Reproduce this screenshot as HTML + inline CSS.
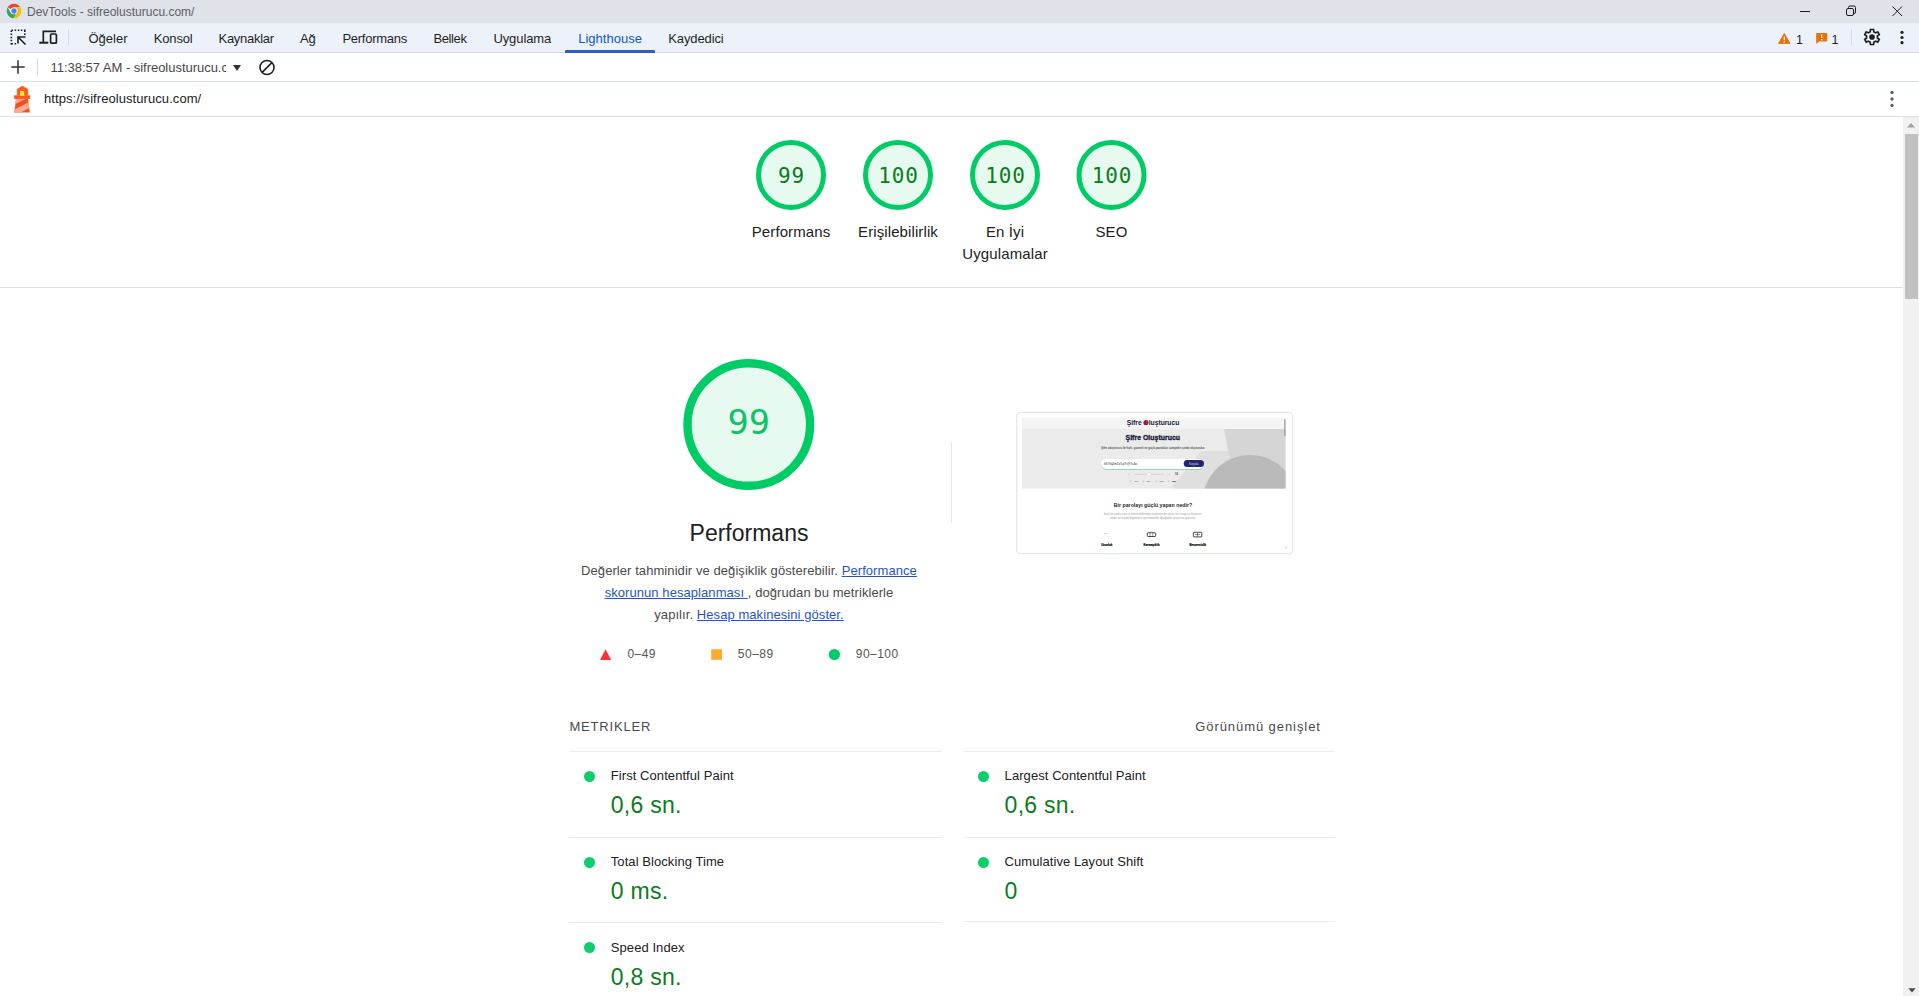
<!DOCTYPE html>
<html lang="tr">
<head>
<meta charset="utf-8">
<title>DevTools - sifreolusturucu.com/</title>
<style>
*{box-sizing:border-box;margin:0;padding:0}
html,body{width:1919px;height:996px;overflow:hidden;background:#fff}
body{position:relative;font-family:"Liberation Sans",sans-serif;color:#202124}
.abs{position:absolute;white-space:nowrap}
#titlebar{position:absolute;left:0;top:0;width:1919px;height:23px;background:#dfe2e9}
#tabbar{position:absolute;left:0;top:23px;width:1919px;height:30px;background:#edf2fa;border-bottom:1px solid #d3dcea}
#toolbar{position:absolute;left:0;top:53px;width:1919px;height:29px;background:#fff;border-bottom:1px solid #d6dfec}
#urlbar{position:absolute;left:0;top:82px;width:1919px;height:35px;background:#fff;border-bottom:1px solid #e0e0e0}
.tab{position:absolute;top:31px;font-size:13px;line-height:15px;color:#1f1f1f;white-space:nowrap;letter-spacing:-0.2px}
.tab.sel{color:#0b57d0}
#scroll{position:absolute;left:1903px;top:117px;width:16px;height:879px;background:#f1f1f1}
#thumb{position:absolute;left:1905px;top:134px;width:13px;height:165px;background:#c1c1c1}
.gl{position:absolute;text-align:center;font-size:15px;line-height:22px;color:#212121}
.gnum{font-family:"Liberation Mono",monospace;}
.mlabel{position:absolute;font-size:13px;line-height:16px;color:#212121;white-space:nowrap;letter-spacing:0.07px}
.mval{position:absolute;font-size:23px;line-height:28px;color:#0a7d1c;white-space:nowrap;letter-spacing:0.25px}
.dot{position:absolute;width:11.300px;height:11.300px;border-radius:50%;background:#0cce6b}
.hr{position:absolute;height:1px;background:#ebebeb}
a{color:#1f55cc;text-decoration:underline}
</style>
</head>
<body>
<div id="titlebar"></div>
<div id="tabbar"></div>
<div id="toolbar"></div>
<div id="urlbar"></div>

<!-- title bar -->
<svg class="abs" style="left:5.800px;top:2.900px" width="16" height="16" viewBox="0 0 48 48">
  <circle cx="24" cy="24" r="22" fill="#fff"/>
  <path d="M24 2A22 22 0 0 1 43.05 13H24a11 11 0 0 0-9.53 5.5L5 13.1A22 22 0 0 1 24 2z" fill="#ea4335"/>
  <path d="M43.05 13A22 22 0 0 1 22.5 45.95L32 29.5A11 11 0 0 0 33.5 18.5 11 11 0 0 0 24 13z" fill="#fbbc04"/>
  <path d="M22.5 45.95A22 22 0 0 1 4.95 13.1L14.47 29.5A11 11 0 0 0 32 29.5z" fill="#34a853"/>
  <circle cx="24" cy="24" r="10" fill="#fff"/>
  <circle cx="24" cy="24" r="8" fill="#4285f4"/>
</svg>
<div class="abs" style="left:27px;top:4.700px;font-size:12px;line-height:14px;color:#5c5f66">DevTools - sifreolusturucu.com/</div>
<svg class="abs" style="left:1780px;top:0" width="139" height="23" viewBox="0 0 139 23" fill="none" stroke="#1b1b1b" stroke-width="1">
  <path d="M20 11.5h10"/>
  <rect x="66.5" y="8.500" width="7" height="7" rx="1.5"/>
  <path d="M68.500 8.500v-1a1.500 1.500 0 0 1 1.500-1.500h4a1.500 1.500 0 0 1 1.500 1.500v4.500a1.500 1.500 0 0 1-1.500 1.500h-0.500"/>
  <path d="M112.500 6.500l9.500 9.500M122 6.500l-9.500 9.500"/>
</svg>

<!-- tab bar -->
<svg class="abs" style="left:9px;top:28px" width="50" height="18" viewBox="0 0 50 18" fill="none" stroke="#1f1f1f">
  <path d="M2.500 2.300h14" stroke-width="1.600" stroke-dasharray="1.500 1.620"/>
  <path d="M2.300 2.500v14" stroke-width="1.600" stroke-dasharray="1.500 1.620"/>
  <path d="M2.500 15.800h5.500" stroke-width="1.600" stroke-dasharray="1.500 1.620"/>
  <path d="M15.800 2.500v5" stroke-width="1.600" stroke-dasharray="1.500 1.620"/>
  <path d="M9 15.500v-6.500h7.500M9.500 9.500l7 7" stroke-width="1.600"/>
  <path d="M34.300 14v-10.600h12.700" stroke-width="1.700"/>
  <path d="M30.300 14.700h9" stroke-width="2"/>
  <rect x="41.600" y="6" width="5.800" height="9.200" rx="1" stroke-width="1.700"/>
</svg>
<div class="abs" style="left:68px;top:29px;width:1px;height:16px;background:#d3dbe8"></div>
<div class="tab" style="left:88.500px;letter-spacing:0">Öğeler</div>
<div class="tab" style="left:153.800px;letter-spacing:-0.170px">Konsol</div>
<div class="tab" style="left:218.500px;letter-spacing:-0.270px">Kaynaklar</div>
<div class="tab" style="left:300px;letter-spacing:-0.200px">Ağ</div>
<div class="tab" style="left:342.400px;letter-spacing:-0.260px">Performans</div>
<div class="tab" style="left:433.400px;letter-spacing:-0.370px">Bellek</div>
<div class="tab" style="left:493.400px;letter-spacing:-0.090px">Uygulama</div>
<div class="tab sel" style="left:578.200px;letter-spacing:0.020px">Lighthouse</div>
<div class="tab" style="left:668.300px;letter-spacing:-0.120px">Kaydedici</div>
<div class="abs" style="left:565px;top:50px;width:90px;height:2.500px;background:#2b5fc7;border-radius:1px 1px 0 0"></div>
<div id="scroll"></div>
<!-- right side of tab bar -->
<svg class="abs" style="left:1777px;top:32px" width="14" height="13" viewBox="0 0 14 13">
  <path d="M7.300 1.600L13 11.400H1.600z" fill="#e8710a" stroke="#e8710a" stroke-width="1" stroke-linejoin="round"/>
  <rect x="6.700" y="4.600" width="1.300" height="3.600" fill="#fff"/><rect x="6.700" y="9.200" width="1.300" height="1.300" fill="#fff"/>
</svg>
<div class="abs" style="left:1796px;top:32.500px;font-size:12.500px;line-height:15px;color:#1f1f1f">1</div>
<svg class="abs" style="left:1815px;top:32px" width="13" height="13" viewBox="0 0 13 13">
  <path d="M2 1h9.500a0.800 0.800 0 0 1 0.800 0.800v6.900a0.800 0.800 0 0 1-0.800 0.800H4l-2.800 2.600V1.800A0.800 0.800 0 0 1 2 1z" fill="#e8710a"/>
  <rect x="6" y="2.500" width="1.300" height="3.500" fill="#fff"/><rect x="6" y="7" width="1.300" height="1.300" fill="#fff"/>
</svg>
<div class="abs" style="left:1831.500px;top:32.500px;font-size:12.500px;line-height:15px;color:#1f1f1f">1</div>
<div class="abs" style="left:1851px;top:29px;width:1px;height:16px;background:#d3dbe8"></div>
<svg class="abs" style="left:1862px;top:27px" width="20" height="20" viewBox="0 -960 960 960">
  <path fill="#1f1f1f" d="m370-80-16-128q-13-5-24.500-12T307-235l-119 50L78-375l103-78q-1-7-1-13.500v-27q0-6.500 1-13.500L78-585l110-190 119 50q11-8 23-15t24-12l16-128h220l16 128q13 5 24.500 12t22.500 15l119-50 110 190-103 78q1 7 1 13.500v27q0 6.500-2 13.500l103 78-110 190-118-50q-11 8-23 15t-24 12L590-80H370Zm70-80h79l14-106q31-8 57.500-23.500T639-327l99 41 39-68-86-65q5-14 7-29.500t2-31.500q0-16-2-31.500t-7-29.500l86-65-39-68-99 42q-22-23-48.500-38.500T533-694l-13-106h-79l-14 106q-31 8-57.500 23.500T321-633l-99-41-39 68 86 64q-5 15-7 30t-2 32q0 16 2 31t7 30l-86 65 39 68 99-42q22 23 48.500 38.500T427-266l13 106Z"/>
  <circle cx="480" cy="-480" r="135" fill="#1f1f1f"/>
</svg>
<svg class="abs" style="left:1898px;top:29px" width="8" height="18" viewBox="0 0 8 18" fill="#1f1f1f">
  <circle cx="4" cy="3.300" r="1.600"/><circle cx="4" cy="8.500" r="1.600"/><circle cx="4" cy="13.700" r="1.600"/>
</svg>

<!-- toolbar row -->
<svg class="abs" style="left:10px;top:59px" width="16" height="16" viewBox="0 0 16 16" stroke="#333" stroke-width="1.500" fill="none"><path d="M8 1.300v13.400M1.300 8h13.400"/></svg>
<div class="abs" style="left:37px;top:58px;width:1px;height:17px;background:#d3dbe8"></div>
<div class="abs" style="left:50.600px;top:59.500px;width:175px;overflow:hidden;font-size:13px;line-height:16px;color:#474747;letter-spacing:-0.030px">11:38:57 AM - sifreolusturucu.com/</div>
<svg class="abs" style="left:232px;top:64px" width="10" height="8" viewBox="0 0 10 8"><path d="M1 1h8L5 7z" fill="#333"/></svg>
<svg class="abs" style="left:258px;top:59px" width="18" height="18" viewBox="0 0 18 18" fill="none" stroke="#1f1f1f" stroke-width="1.600"><circle cx="9" cy="8.500" r="7"/><path d="M13.900 3.600L4.100 13.400"/></svg>

<!-- url row -->
<svg class="abs" style="left:8px;top:82px" width="30" height="34" viewBox="0 0 30 34">
  <defs><clipPath id="twr"><path d="M8 16.900H20.100L21.800 30.400H6.300z"/></clipPath></defs>
  <path d="M14.200 4L19.800 7.300V13.300H9.200V7.300z" fill="#ff5722" stroke="#ff5722" stroke-width="0.600" stroke-linejoin="round"/>
  <rect x="6.100" y="13.300" width="16.100" height="3.600" fill="#ff5722"/>
  <rect x="12" y="8.900" width="4.200" height="4.900" fill="#ffeb3b"/>
  <path d="M8 16.900H20.100L21.800 30.400H6.300z" fill="#f4511e"/>
  <g clip-path="url(#twr)" fill="#ffab91">
    <path d="M5 14H23V14.100L5 23.200z"/>
    <path d="M5 28.200L23 19V25.300L5 34.300z"/>
  </g>
</svg>
<div class="abs" style="left:44px;top:90.700px;font-size:13px;line-height:16px;color:#202124;letter-spacing:0.070px">https://sifreolusturucu.com/</div>
<svg class="abs" style="left:1888px;top:90px" width="8" height="18" viewBox="0 0 8 18" fill="#5f6368">
  <circle cx="4" cy="2.500" r="1.700"/><circle cx="4" cy="9" r="1.700"/><circle cx="4" cy="15.500" r="1.700"/>
</svg>
<svg class="abs" style="left:1906px;top:121px" width="10" height="8" viewBox="0 0 10 8"><path d="M1 6.500h8L5 2z" fill="#a3a3a3"/></svg>
<svg class="abs" style="left:1906.500px;top:986.500px" width="10" height="8" viewBox="0 0 10 8"><path d="M1.300 1.300h7.400L5 5.600z" fill="#4a4a4a"/></svg>

<div id="thumb"></div>

<!-- score gauges -->
<svg class="abs" style="left:740px;top:130px" width="430" height="90" viewBox="740 130 430 90">
  <g fill="#e7faf0" stroke="#0c6" stroke-width="5">
    <circle cx="791" cy="175" r="32.500"/><circle cx="898" cy="175" r="32.500"/><circle cx="1005" cy="175" r="32.500"/><circle cx="1111.500" cy="175" r="32.500"/>
  </g>
  <g font-family="'DejaVu Sans Mono','Liberation Mono',monospace" font-size="21" fill="#0a7d1c" text-anchor="middle" letter-spacing="0.850">
    <text x="791.4" y="182.800">99</text><text x="898.4" y="182.800">100</text><text x="1005.4" y="182.800">100</text><text x="1111.9" y="182.800">100</text>
  </g>
</svg>
<div class="gl" style="left:731px;top:221px;width:120px;letter-spacing:0.100px">Performans</div>
<div class="gl" style="left:838px;top:221px;width:120px;letter-spacing:0.100px">Erişilebilirlik</div>
<div class="gl" style="left:945px;top:221px;width:120px;letter-spacing:0.120px">En İyi<br>Uygulamalar</div>
<div class="gl" style="left:1051.500px;top:221px;width:120px;letter-spacing:0.100px">SEO</div>
<div class="abs" style="left:0;top:287px;width:1903px;height:1px;background:#e0e0e0"></div>

<!-- big gauge -->
<svg class="abs" style="left:675px;top:350px" width="148" height="150" viewBox="675 350 148 150">
  <circle cx="748.800" cy="424.500" r="61.300" fill="#e7faf0" stroke="#0c6" stroke-width="8.400"/>
  <text x="748.800" y="433.600" font-family="'DejaVu Sans Mono','Liberation Mono',monospace" font-size="33" fill="#0cc466" text-anchor="middle" textLength="42.500" lengthAdjust="spacingAndGlyphs">99</text>
</svg>
<div class="abs" style="left:629px;top:519px;width:240px;text-align:center;font-size:23px;line-height:28px;color:#212121">Performans</div>
<div class="abs" style="left:569px;top:560px;width:360px;text-align:center;font-size:13px;line-height:22px;color:#4a4a4a;letter-spacing:0.070px;white-space:normal">Değerler tahminidir ve değişiklik gösterebilir. <a>Performance<br>skorunun hesaplanması </a>, doğrudan bu metriklerle<br>yapılır. <a>Hesap makinesini göster.</a></div>
<svg class="abs" style="left:598px;top:647px" width="250" height="16" viewBox="598 647 250 16">
  <path d="M605.600 649.200L611.200 660H600z" fill="#f33"/>
  <rect x="711.200" y="649.200" width="10.800" height="10.600" fill="#fa3"/>
  <circle cx="834.400" cy="654.500" r="5.600" fill="#0c6"/>
</svg>
<div class="abs" style="left:627.500px;top:646px;font-size:12px;line-height:16px;color:#555;letter-spacing:0.400px">0–49</div>
<div class="abs" style="left:737.800px;top:646px;font-size:12px;line-height:16px;color:#555;letter-spacing:0.500px">50–89</div>
<div class="abs" style="left:855.800px;top:646px;font-size:12px;line-height:16px;color:#555;letter-spacing:0.450px">90–100</div>
<div class="abs" style="left:951px;top:442px;width:1px;height:81px;background:#e6e6e6"></div>


<!-- final screenshot thumbnail -->
<svg class="abs" style="left:1014px;top:410px" width="282" height="146" viewBox="1014 410 282 146" font-family="'Liberation Sans',sans-serif">
  <defs><clipPath id="hero"><rect x="1022" y="429" width="263.500" height="59.500"/></clipPath></defs>
  <rect x="1016.800" y="412.400" width="275.800" height="141.200" rx="3" fill="#fff" stroke="#e2e2e2" stroke-width="1"/>
  <rect x="1022" y="417.600" width="263.500" height="11.400" fill="#f4f4f4"/>
  <rect x="1022" y="429" width="263.500" height="59.500" fill="#ebebeb"/>
  <g clip-path="url(#hero)">
    <path d="M1201.400 451H1229L1236 489H1170z" fill="#dfdfdf"/>
    <path d="M1223.900 429H1287V489H1236z" fill="#d5d5d5"/>
    <circle cx="1250" cy="502.500" r="47.500" fill="#bababa"/>
  </g>
  <rect x="1284.200" y="419.200" width="1.300" height="16.800" fill="#9a9a9a"/>
  <circle cx="1145.700" cy="422.900" r="2.300" fill="#b3243c"/><text x="1153" y="425.400" font-size="7" font-weight="bold" fill="#1b1b3f" text-anchor="middle" textLength="52.500" lengthAdjust="spacingAndGlyphs">Şifre <tspan fill="#7a1a3a">O</tspan>luşturucu</text>
  <text x="1152.800" y="440.200" font-size="7" font-weight="bold" fill="#15153a" stroke="#15153a" stroke-width="0.300" text-anchor="middle" textLength="54.500" lengthAdjust="spacingAndGlyphs">Şifre Oluşturucu</text>
  <text x="1153" y="448.700" font-size="2.800" fill="#111" text-anchor="middle" textLength="104" lengthAdjust="spacingAndGlyphs">Şifre oluşturucu ile hızlı, güvenli ve güçlü parolalar saniyeler içinde oluşturulur.</text>
  <rect x="1101.500" y="460" width="102.500" height="10" rx="5" fill="#8fd6bb"/>
  <rect x="1101.200" y="459" width="103" height="10" rx="5" fill="#fff"/>
  <text x="1104" y="465" font-size="2.600" fill="#222" textLength="33" lengthAdjust="spacingAndGlyphs">k9#Vq2mZx!Lp7r@Ts4w</text>
  <rect x="1183.700" y="460" width="20.300" height="7" rx="3.500" fill="#23236e"/>
  <text x="1193.800" y="464.500" font-size="2.600" fill="#cfd3ff" text-anchor="middle">Kopyala</text>
  <rect x="1134" y="473.700" width="30" height="1.200" rx="0.600" fill="#d6d6dc"/>
  <circle cx="1149" cy="474.300" r="1.900" fill="#fff" stroke="#c9c9d6" stroke-width="0.400"/>
  <rect x="1128" y="473.200" width="2.400" height="2.400" rx="0.600" fill="#dcdcf0"/><rect x="1167.500" y="473.200" width="2.400" height="2.400" rx="0.600" fill="#dcdcf0"/>
  <text x="1175" y="475.300" font-size="2.600" font-weight="bold" fill="#333">16</text>
  <g fill="#cfd3ee"><rect x="1129.500" y="480.300" width="2" height="2" rx="0.500"/><rect x="1142.500" y="480.300" width="2" height="2" rx="0.500"/><rect x="1155.500" y="480.300" width="2" height="2" rx="0.500"/><rect x="1167.500" y="480.300" width="2" height="2" rx="0.500"/></g>
  <g font-size="2.400" fill="#555"><text x="1133.500" y="482.200">ABC</text><text x="1146.500" y="482.200">abc</text><text x="1159.500" y="482.200">123</text><text x="1171.500" y="482.200" font-weight="bold" fill="#222">#$&amp;</text></g>
  <text x="1153" y="507" font-size="5.800" font-weight="bold" fill="#2a2a2a" text-anchor="middle" textLength="78.600" lengthAdjust="spacingAndGlyphs">Bir parolayı güçlü yapan nedir?</text>
  <text x="1152.700" y="514.800" font-size="2.700" fill="#9a9a9a" text-anchor="middle" textLength="97.800" lengthAdjust="spacingAndGlyphs">Güçlü bir parola, uzun ve tahmin edilemeyen karakterlerden oluşur; her hesap için benzersiz</text>
  <text x="1152.800" y="518.700" font-size="2.700" fill="#9a9a9a" text-anchor="middle" textLength="85.700" lengthAdjust="spacingAndGlyphs">olmalı ve kişisel bilgilerinizi içermemelidir. Aşağıdaki ipuçlarına göz atın.</text>
  <text x="1106.600" y="535.500" font-size="3" fill="#999" text-anchor="middle">***_</text>
  <rect x="1147.300" y="532.700" width="8.400" height="3.800" rx="0.800" fill="none" stroke="#333" stroke-width="0.900"/><path d="M1150 533v3.500M1152.800 533v3.500" stroke="#333" stroke-width="0.500"/>
  <rect x="1193.400" y="532.300" width="8.400" height="4.600" rx="0.500" fill="none" stroke="#333" stroke-width="0.900"/><path d="M1195 534.600h5M1197.600 533v3.500" stroke="#333" stroke-width="0.600"/>
  <g font-size="2.900" font-weight="bold" fill="#000" stroke="#000" stroke-width="0.150" text-anchor="middle"><text x="1106.800" y="546">Uzunluk</text><text x="1151.500" y="546">Karmaşıklık</text><text x="1197.800" y="546">Benzersizlik</text></g>
  <path d="M1285.300 547.300h1.600l-0.800 1z" fill="#888"/>
</svg>
<!-- metrics -->
<div class="abs" style="left:569.400px;top:718.500px;font-size:13px;line-height:16px;color:#4a4a4a;letter-spacing:0.830px">METRIKLER</div>
<div class="abs" style="left:1195.200px;top:718.500px;font-size:13px;line-height:16px;color:#4a4a4a;letter-spacing:0.930px">Görünümü genişlet</div>
<div class="hr" style="left:568.500px;top:751px;width:373px"></div>
<div class="hr" style="left:963.500px;top:751px;width:371px"></div>
<div class="hr" style="left:568.500px;top:837px;width:373px"></div>
<div class="hr" style="left:963.500px;top:837px;width:371px"></div>
<div class="hr" style="left:568.500px;top:922px;width:373px"></div>
<div class="hr" style="left:963.500px;top:921px;width:371px"></div>

<div class="dot" style="left:583.800px;top:771px"></div>
<div class="mlabel" style="left:610.800px;top:767.500px">First Contentful Paint</div>
<div class="mval" style="left:610.800px;top:791px">0,6 sn.</div>
<div class="dot" style="left:977.500px;top:771px"></div>
<div class="mlabel" style="left:1004.600px;top:767.500px">Largest Contentful Paint</div>
<div class="mval" style="left:1004.600px;top:791px">0,6 sn.</div>

<div class="dot" style="left:583.800px;top:856.700px"></div>
<div class="mlabel" style="left:610.800px;top:853.900px">Total Blocking Time</div>
<div class="mval" style="left:610.800px;top:876.700px">0 ms.</div>
<div class="dot" style="left:977.500px;top:856.700px"></div>
<div class="mlabel" style="left:1004.600px;top:853.900px">Cumulative Layout Shift</div>
<div class="mval" style="left:1004.600px;top:876.700px">0</div>

<div class="dot" style="left:583.800px;top:941.900px"></div>
<div class="mlabel" style="left:610.800px;top:939.700px">Speed Index</div>
<div class="mval" style="left:610.800px;top:962.900px">0,8 sn.</div>
</body>
</html>
